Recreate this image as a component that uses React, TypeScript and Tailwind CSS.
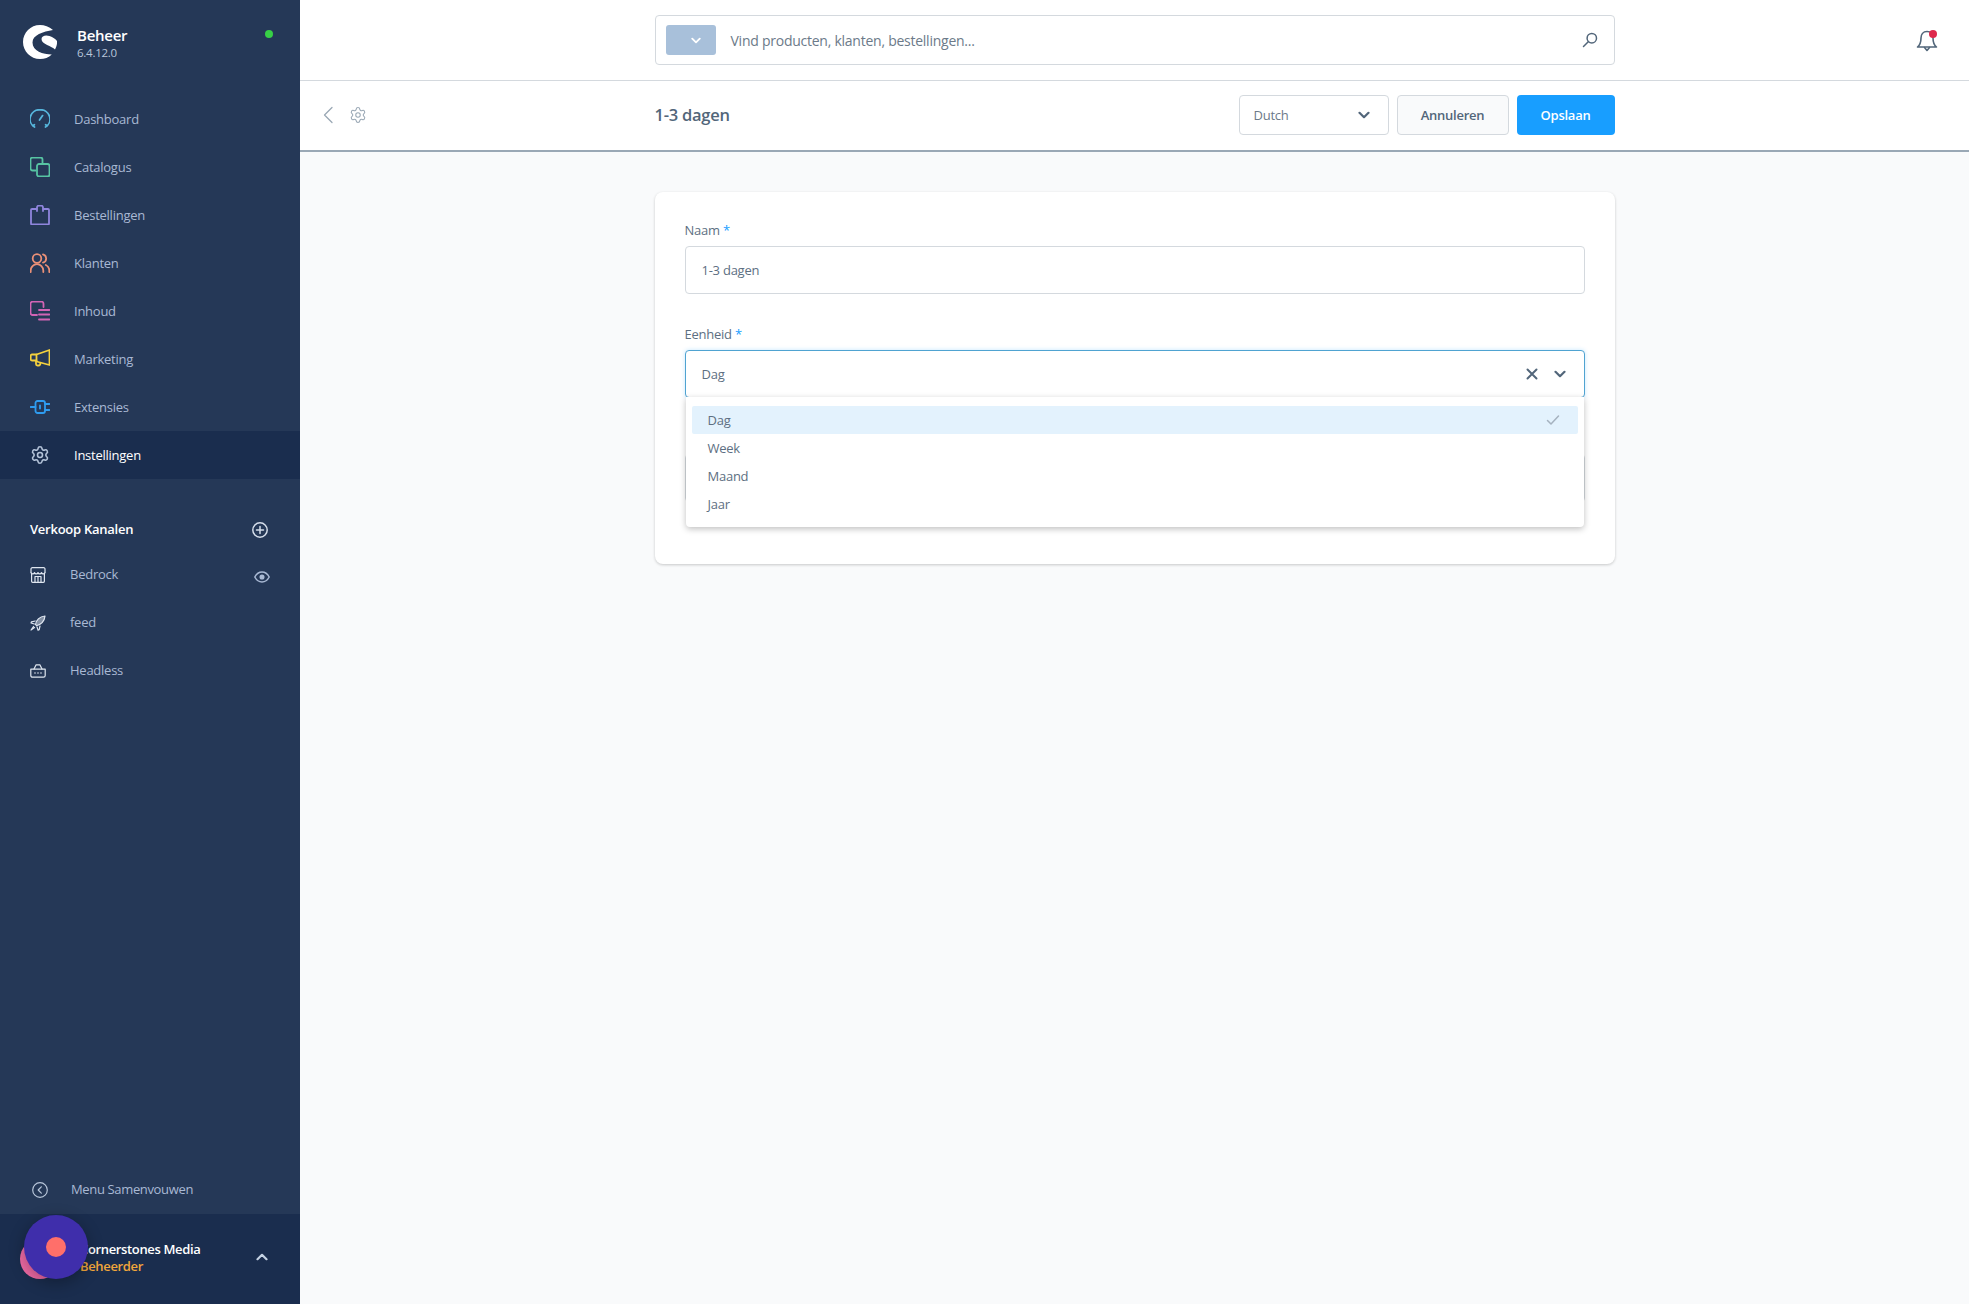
import React from "react";
import { Settings } from "lucide-react";

const font = "font-['Open_Sans','Liberation_Sans',sans-serif] tracking-[-0.25px]";

type IconProps = { className?: string };

const Svg = ({ className, children }: { className?: string; children: React.ReactNode }) => (
  <svg viewBox="0 0 20 20" fill="none" stroke="currentColor" strokeWidth="1.8" strokeLinecap="round" strokeLinejoin="round" className={className}>
    {children}
  </svg>
);

const DashboardIcon = ({ className }: IconProps) => (
  <Svg className={className}>
    <path d="M4.5 18A9.3 9.3 0 0 1 10 .8 9.3 9.3 0 0 1 15.5 18" />
    <path d="M3 16.6 4.4 15.8M17 16.6 15.6 15.8M9.5 11 12.6 6.6" />
  </Svg>
);
const CatalogIcon = ({ className }: IconProps) => (
  <Svg className={className}>
    <path d="M5.5 13.500H2.500a2 2 0 0 1-2-2v-9a2 2 0 0 1 2-2h8a2 2 0 0 1 2 2v4" />
    <rect x="7" y="7" width="12.500" height="12.500" rx="2" />
  </Svg>
);
const BagIcon = ({ className }: IconProps) => (
  <Svg className={className}>
    <path d="M6.500 4H2a1 1 0 0 0-1 1v13.500a1 1 0 0 0 1 1h16a1 1 0 0 0 1-1V5a1 1 0 0 0-1-1h-4.500" />
    <path d="M7 6V2.500A1.800 1.800 0 0 1 8.800.7h2.400A1.800 1.800 0 0 1 13 2.500V6" />
  </Svg>
);
const UsersIcon = ({ className }: IconProps) => (
  <Svg className={className}>
    <circle cx="7" cy="5.500" r="4.300" />
    <path d="M.7 19v-1.500a6.300 6.300 0 0 1 12.600 0V19" />
    <path d="M13 1.300a4.300 4.300 0 0 1 0 8.300M15.800 12a6.300 6.300 0 0 1 3.500 5.500V19" />
  </Svg>
);
const ContentIcon = ({ className }: IconProps) => (
  <Svg className={className}>
    <path d="M7 14H2.500a2 2 0 0 1-2-2V2.700a2 2 0 0 1 2-2h9a2 2 0 0 1 2 2V6" />
    <path d="M9 9h10.500M9 13.500h10.500M9 18.500h10.500" />
  </Svg>
);
const MegaphoneIcon = ({ className }: IconProps) => (
  <Svg className={className}>
    <path d="M6.500 5.500 19.500 1v15l-13-3.500z" />
    <path d="M6.500 5.500H2a1.300 1.300 0 0 0-1.300 1.300v3.400A1.300 1.300 0 0 0 2 11.500h4.500" />
    <path d="M6 12.500v2.500a1.500 1.500 0 0 0 1.500 1.500h1A1.800 1.800 0 0 0 10.200 14" />
  </Svg>
);
const PlugIcon = ({ className }: IconProps) => (
  <Svg className={className}>
    <rect x="5.500" y="4" width="9.500" height="12" rx="2" />
    <path d="M.5 10h5M15 7h4.500M15 13h4.500M10 8.500v3" />
  </Svg>
);
const Chevron = ({ className, up = false }: { className?: string; up?: boolean }) => (
  <svg viewBox="0 0 12 8" fill="none" stroke="currentColor" strokeWidth="2.200" strokeLinecap="round" strokeLinejoin="round" className={className}>
    <path d={up ? "M1.500 6.200 6 1.800l4.500 4.400" : "M1.500 1.800 6 6.200l4.500-4.400"} />
  </svg>
);

const GearIcon = ({ className }: IconProps) => <Settings className={className} strokeWidth={1.9} />;

const navItems = [
  { label: "Dashboard", Icon: DashboardIcon, color: "text-[#57b7dd]" },
  { label: "Catalogus", Icon: CatalogIcon, color: "text-[#57c4a3]" },
  { label: "Bestellingen", Icon: BagIcon, color: "text-[#8f85dd]" },
  { label: "Klanten", Icon: UsersIcon, color: "text-[#ea9077]" },
  { label: "Inhoud", Icon: ContentIcon, color: "text-[#d264b5]" },
  { label: "Marketing", Icon: MegaphoneIcon, color: "text-[#f4d13e]" },
  { label: "Extensies", Icon: PlugIcon, color: "text-[#2e9cf0]" },
  { label: "Instellingen", Icon: GearIcon, color: "text-[#b3c2d8]", active: true },
];

const StoreIcon = ({ className }: IconProps) => (
  <svg viewBox="0 0 16 16" fill="none" stroke="currentColor" strokeWidth="1.200" strokeLinejoin="round" className={className}>
    <path d="M1 6V2a1.300 1.300 0 0 1 1.300-1.300h11.400A1.300 1.300 0 0 1 15 2v4" />
    <path d="M1 5.500a1.800 1.800 0 0 0 3.500 0 1.800 1.800 0 0 0 3.500 0 1.800 1.800 0 0 0 3.500 0 1.800 1.800 0 0 0 3.500 0" />
    <path d="M1.600 7v7.300a1 1 0 0 0 1 1h10.800a1 1 0 0 0 1-1V7" />
    <path d="M5 15V9.500h6V15M8 9.500V15" />
  </svg>
);
const RocketIcon = ({ className }: IconProps) => (
  <svg viewBox="0 0 16 16" fill="none" stroke="currentColor" strokeWidth="1.200" strokeLinejoin="round" strokeLinecap="round" className={className}>
    <path d="M5.500 9.500C6 5.500 9.500 1.500 15 1c-.4 5.500-4.400 9-8.400 9.600z" fill="currentColor" fillOpacity="0.5" />
    <path d="M5.200 6 1.500 6.800 1 8l3.400 1M10 11l-.8 3.600-1.200.6L7 11.800M3.500 11.500 1 15l3.500-2.500" />
  </svg>
);
const BasketIcon = ({ className }: IconProps) => (
  <svg viewBox="0 0 16 14" fill="none" stroke="currentColor" strokeWidth="1.200" strokeLinejoin="round" strokeLinecap="round" className={className}>
    <path d="M.8 5.200h14.400v6.300a1.700 1.700 0 0 1-1.700 1.700H2.500A1.700 1.700 0 0 1 .8 11.500z" />
    <path d="M4 5 6 .9M12 5 10 .9M6 .9h4" />
    <path d="M5 9h.01M8 9h.01M11 9h.01" strokeWidth="1.600" />
  </svg>
);

const channels = [
  { label: "Bedrock", Icon: StoreIcon, size: "w-4 h-4", eye: true },
  { label: "feed", Icon: RocketIcon, size: "w-4 h-4", eye: false },
  { label: "Headless", Icon: BasketIcon, size: "w-4 h-[14px]", eye: false },
];

const Field = ({ label, children }: { label?: string; children: React.ReactNode }) => (
  <div className="mb-[31px]">
    <div className="mb-[2px] h-[23px] text-[13px] leading-[18px] text-[#5d6f82]">
      {label ? (
        <>
          {label} <span className="text-[#189eff]">*</span>
        </>
      ) : null}
    </div>
    {children}
  </div>
);

export default function App() {
  return (
    <div className={`flex h-screen w-full overflow-hidden bg-[#f9fafb] ${font}`}>
      <aside className="relative flex w-[300px] shrink-0 flex-col bg-[#253857]">
        <div className="relative flex h-[95px] shrink-0 items-start pl-[23px] pt-[25px]">
          <svg viewBox="0 0 34 34" className="h-[34px] w-[34px]" fill="#fff">
            <path d="M30 5C26 1.500 21.500 0 17 0 7.600 0 0 7.600 0 17s7.600 17 17 17c4.600 0 8.700-1.500 11.800-4.500C20 29.500 9.500 26 9.500 17.500 9.500 10 20 6.500 30 5z" />
            <path d="M18.500 14c0-3 4-4.500 8-3 3.500 1.300 6 3 7.500 5 .3 3-.5 6-2 8.500-3-3.500-13.500-5-13.500-10.500z" />
          </svg>
          <div className="ml-[20px]">
            <div className="text-[15px] font-semibold leading-[21px] text-white">Beheer</div>
            <div className="text-[11.500px] leading-[14px] text-[#b8c6da]">6.4.12.0</div>
          </div>
          <div className="absolute left-[265px] top-[30px] h-2 w-2 rounded-full bg-[#37d046]" />
        </div>

        <nav>
          {navItems.map(({ label, Icon, color, active }) => (
            <div key={label} className={`flex h-12 items-center pl-[30px] text-[13px] ${active ? "bg-[#1a2d4e] text-white" : "text-[#a9b9d4]"}`}>
              <Icon className={`h-5 w-5 ${color}`} />
              <span className="ml-[24px] pt-[1px]">{label}</span>
            </div>
          ))}
        </nav>

        <div className="mt-[39px] flex h-6 items-center justify-between pl-[30px] pr-[32px]">
          <span className="text-[13px] font-semibold text-white">Verkoop Kanalen</span>
          <svg viewBox="0 0 16 16" fill="none" stroke="#d5deeb" strokeWidth="1.500" strokeLinecap="round" className="h-4 w-4">
            <circle cx="8" cy="8" r="7.200" />
            <path d="M8 4.500v7M4.500 8h7" />
          </svg>
        </div>
        <div className="mt-[9px]">
          {channels.map(({ label, Icon, size, eye }) => (
            <div key={label} className="flex h-12 items-center pl-[30px] pr-[30px] text-[13px] text-[#a9b9d4]">
              <span className="flex w-10 items-center">
                <Icon className={`${size} text-[#dfe6f0]`} />
              </span>
              <span className="flex-1">{label}</span>
              {eye && (
                <svg viewBox="0 0 16 12" fill="none" stroke="#a9b9d4" strokeWidth="1.500" className="mt-[4px] h-3 w-4">
                  <path d="M.8 6C2.500 2.800 5 1 8 1s5.500 1.800 7.200 5C13.500 9.200 11 11 8 11S2.500 9.200.8 6z" />
                  <circle cx="8" cy="6" r="1.800" fill="#a9b9d4" />
                </svg>
              )}
            </div>
          ))}
        </div>

        <div className="mt-auto flex h-12 shrink-0 items-center pl-[32px] text-[13px] tracking-[-0.35px] text-[#a9b9d4]">
          <svg viewBox="0 0 16 16" fill="none" stroke="#b8c6da" strokeWidth="1.200" strokeLinecap="round" strokeLinejoin="round" className="h-4 w-4">
            <circle cx="8" cy="8" r="7.300" />
            <path d="M9.300 4.800 6.200 8l3.100 3.200" />
          </svg>
          <span className="ml-[23px]">Menu Samenvouwen</span>
        </div>
        <div className="relative flex h-[90px] shrink-0 items-center bg-[#1a2d4e] pl-[80px] pr-[32px]">
          <div className="mb-[2px] flex-1 tracking-[-0.35px]">
            <div className="text-[13px] font-semibold leading-[17px] text-white">Cornerstones Media</div>
            <div className="text-[13px] font-semibold leading-[17px] text-[#f2a73b]">Beheerder</div>
          </div>
          <Chevron up className="mb-[5px] h-[8px] w-[12px] text-[#c5d2e3]" />
          <div className="absolute left-[20px] top-[25px] h-[40px] w-[40px] rounded-full bg-[#ef6aa5]" />
          <div className="absolute left-[24px] top-[1px] flex h-[64px] w-[64px] items-center justify-center rounded-full bg-[#3f2eab] shadow-[0_4px_16px_rgba(0,0,0,0.3)]">
            <div className="h-5 w-5 rounded-full bg-[#ff6f6a]" />
          </div>
        </div>
      </aside>

      <main className="flex min-w-0 flex-1 flex-col">
        <div className="grid h-[81px] shrink-0 grid-cols-[1fr_960px_1fr] items-center border-b border-[#d4d9de] bg-white">
          <div />
          <div className="flex h-[50px] items-center rounded-[4px] border border-[#d4d9de] bg-white pl-[10px] pr-[16px]">
            <div className="flex h-[30px] w-[50px] items-center justify-center rounded-[3px] bg-[#a8c0da] pl-[10px]">
              <Chevron className="h-[7px] w-[10px] text-white" />
            </div>
            <span className="ml-[15px] flex-1 text-[14px] text-[#6c7a89]">Vind producten, klanten, bestellingen...</span>
            <svg viewBox="0 0 16 16" fill="none" stroke="#52667a" strokeWidth="1.500" strokeLinecap="round" className="h-4 w-4">
              <circle cx="9.800" cy="6.200" r="4.700" />
              <path d="M6.500 9.500 1.500 14.500" />
            </svg>
          </div>
          <div className="flex justify-end pr-[31px]">
            <div className="relative mt-[1px]">
              <svg viewBox="0 0 22 24" fill="none" stroke="#52667a" strokeWidth="1.600" strokeLinejoin="round" strokeLinecap="round" className="h-6 w-[22px]">
                <path d="M11 2.500C7 2.500 5 5.500 5 9c0 4.500-1 7-3.500 9h19c-2.500-2-3.500-4.500-3.500-9 0-3.500-2-6.500-6-6.500z" />
                <path d="M8.500 18.500 11 21.500l2.500-3" />
              </svg>
              <div className="absolute right-[1px] top-[1px] h-2 w-2 rounded-full bg-[#de294c]" />
            </div>
          </div>
        </div>

        <div className="grid h-[71px] shrink-0 grid-cols-[1fr_960px_1fr] items-center border-b-2 border-[#9aa8b5] bg-white pb-[1px]">
          <div className="flex items-center pl-[22px] text-[#9aa8b5]">
            <svg viewBox="0 0 12 18" fill="none" stroke="currentColor" strokeWidth="1.300" strokeLinecap="round" strokeLinejoin="round" className="h-[18px] w-[12px]">
              <path d="M10 1.500 2.500 9l7.500 7.500" />
            </svg>
            <Settings strokeWidth={1.4} className="ml-[15px] h-[18px] w-[18px]" />
          </div>
          <div className="flex items-center">
            <h1 className="flex-1 pt-[1px] text-[16.500px] font-semibold text-[#52667a]">1-3 dagen</h1>
            <div className="flex h-10 w-[150px] items-center justify-between rounded-[4px] border border-[#d4d9de] bg-white pl-[14px] pr-[18px] text-[13px] text-[#6c7a89]">
              <span className="pt-[1px]">Dutch</span>
              <Chevron className="h-[8px] w-[12px] text-[#52667a]" />
            </div>
            <button className="ml-[8px] h-10 w-[112px] rounded-[4px] border border-[#d4d9de] bg-[#f9fafb] pt-[1px] text-[13px] font-semibold text-[#52667a]">Annuleren</button>
            <button className="ml-[8px] h-10 w-[98px] rounded-[4px] bg-[#189eff] pt-[1px] text-[13px] font-semibold text-white">Opslaan</button>
          </div>
          <div />
        </div>

        <div className="grid flex-1 grid-cols-[1fr_960px_1fr] pt-[40px]">
          <div />
          <div className="h-[372px] rounded-[8px] bg-white px-[30px] pt-[29px] shadow-[0_1px_3px_rgba(0,0,0,0.2)]">
            <Field label="Naam">
              <div className="flex h-[48px] items-center rounded-[4px] border border-[#d4d9de] bg-white pl-[16px] pt-[1px] text-[13px] text-[#5d6f82]">1-3 dagen</div>
            </Field>
            <Field label="Eenheid">
              <div className="relative">
                <div className="flex h-[48px] items-center rounded-[4px] border border-[#4fa3d1] bg-white pl-[16px] pr-[18px] text-[13px] text-[#5d6f82] shadow-[0_0_4px_rgba(24,158,255,0.25)]">
                  <span className="flex-1 pt-[1px]">Dag</span>
                  <svg viewBox="0 0 12 12" fill="none" stroke="#52667a" strokeWidth="2" strokeLinecap="round" className="h-3 w-3">
                    <path d="M1.500 1.500l9 9M10.500 1.500l-9 9" />
                  </svg>
                  <Chevron className="ml-[16px] h-[8px] w-[12px] text-[#52667a]" />
                </div>
                <div className="absolute inset-x-[1px] top-[47px] z-10 h-[130px] rounded-b-[4px] bg-white px-[6px] pt-[9px] text-[13px] text-[#5d6f82] shadow-[0_2px_6px_rgba(0,0,0,0.25)]">
                  <div className="flex h-[28px] items-center justify-between rounded-[2px] bg-[#e3f2fd] pl-[16px] pr-[18px]">
                    <span className="pt-[1px]">Dag</span>
                    <svg viewBox="0 0 14 12" fill="none" stroke="#a5b2bf" strokeWidth="1.500" strokeLinecap="round" strokeLinejoin="round" className="h-3 w-[14px]">
                      <path d="M1.500 6.500 5 10l7.500-8" />
                    </svg>
                  </div>
                  {["Week", "Maand", "Jaar"].map((t) => (
                    <div key={t} className="flex h-[28px] items-center pl-[16px] pt-[1px]">{t}</div>
                  ))}
                </div>
              </div>
            </Field>
            <Field>
              <div className="h-[48px] rounded-[4px] border border-[#d4d9de] bg-white" />
            </Field>
          </div>
          <div />
        </div>
      </main>
    </div>
  );
}
